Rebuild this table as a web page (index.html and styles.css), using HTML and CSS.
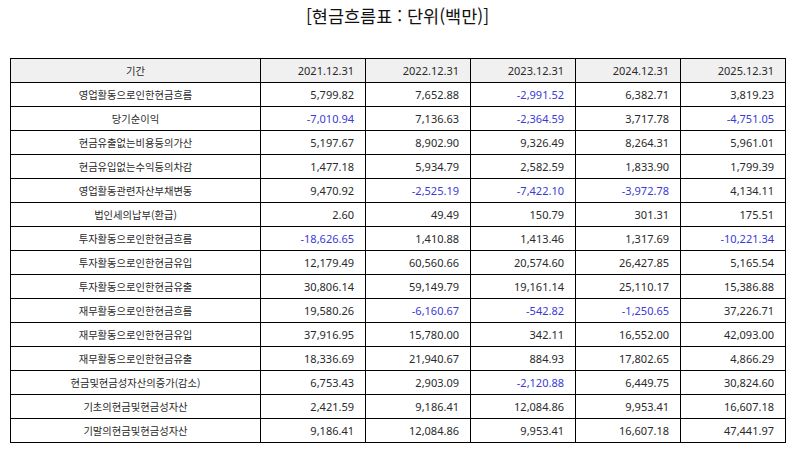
FILE: index.html
```html
<!DOCTYPE html>
<html lang="ko">
<head>
<meta charset="utf-8">
<title>현금흐름표</title>
<link rel="stylesheet" href="styles.css">
</head>
<body>
<div class="page">
  <h1 class="title">[현금흐름표 : 단위(백만)]</h1>
  <table class="cf">
    <colgroup>
      <col class="c-label"><col class="c-num"><col class="c-num"><col class="c-num"><col class="c-num"><col class="c-num">
    </colgroup>
    <thead>
      <tr><th class="label">기간</th><th>2021.12.31</th><th>2022.12.31</th><th>2023.12.31</th><th>2024.12.31</th><th>2025.12.31</th></tr>
    </thead>
    <tbody>
      <tr><td class="label">영업활동으로인한현금흐름</td><td>5,799.82</td><td>7,652.88</td><td class="neg">-2,991.52</td><td>6,382.71</td><td>3,819.23</td></tr>
      <tr><td class="label">당기순이익</td><td class="neg">-7,010.94</td><td>7,136.63</td><td class="neg">-2,364.59</td><td>3,717.78</td><td class="neg">-4,751.05</td></tr>
      <tr><td class="label">현금유출없는비용등의가산</td><td>5,197.67</td><td>8,902.90</td><td>9,326.49</td><td>8,264.31</td><td>5,961.01</td></tr>
      <tr><td class="label">현금유입없는수익등의차감</td><td>1,477.18</td><td>5,934.79</td><td>2,582.59</td><td>1,833.90</td><td>1,799.39</td></tr>
      <tr><td class="label">영업활동관련자산부채변동</td><td>9,470.92</td><td class="neg">-2,525.19</td><td class="neg">-7,422.10</td><td class="neg">-3,972.78</td><td>4,134.11</td></tr>
      <tr><td class="label">법인세의납부(환급)</td><td>2.60</td><td>49.49</td><td>150.79</td><td>301.31</td><td>175.51</td></tr>
      <tr><td class="label">투자활동으로인한현금흐름</td><td class="neg">-18,626.65</td><td>1,410.88</td><td>1,413.46</td><td>1,317.69</td><td class="neg">-10,221.34</td></tr>
      <tr><td class="label">투자활동으로인한현금유입</td><td>12,179.49</td><td>60,560.66</td><td>20,574.60</td><td>26,427.85</td><td>5,165.54</td></tr>
      <tr><td class="label">투자활동으로인한현금유출</td><td>30,806.14</td><td>59,149.79</td><td>19,161.14</td><td>25,110.17</td><td>15,386.88</td></tr>
      <tr><td class="label">재무활동으로인한현금흐름</td><td>19,580.26</td><td class="neg">-6,160.67</td><td class="neg">-542.82</td><td class="neg">-1,250.65</td><td>37,226.71</td></tr>
      <tr><td class="label">재무활동으로인한현금유입</td><td>37,916.95</td><td>15,780.00</td><td>342.11</td><td>16,552.00</td><td>42,093.00</td></tr>
      <tr><td class="label">재무활동으로인한현금유출</td><td>18,336.69</td><td>21,940.67</td><td>884.93</td><td>17,802.65</td><td>4,866.29</td></tr>
      <tr><td class="label">현금및현금성자산의증가(감소)</td><td>6,753.43</td><td>2,903.09</td><td class="neg">-2,120.88</td><td>6,449.75</td><td>30,824.60</td></tr>
      <tr><td class="label">기초의현금및현금성자산</td><td>2,421.59</td><td>9,186.41</td><td>12,084.86</td><td>9,953.41</td><td>16,607.18</td></tr>
      <tr><td class="label">기말의현금및현금성자산</td><td>9,186.41</td><td>12,084.86</td><td>9,953.41</td><td>16,607.18</td><td>47,441.97</td></tr>
    </tbody>
  </table>
</div>
</body>
</html>
```

FILE: styles.css
```css
html, body {
  margin: 0;
  padding: 0;
  background: #ffffff;
}
.page {
  padding: 0 9px 0 10px;
  font-family: "Noto Sans", "Noto Sans CJK KR", sans-serif;
  color: #2a2a2a;
}
.title {
  margin: 0;
  height: 58px;
  padding-top: 4px;
  box-sizing: border-box;
  text-align: center;
  font-family: "Noto Sans CJK KR", sans-serif;
  font-weight: normal;
  font-size: 17.5px;
  line-height: 24px;
  color: #111111;
}
.cf {
  width: 775px;
  border-collapse: collapse;
  table-layout: fixed;
  font-size: 11px;
}
.c-label { width: 250px; }
.c-num { width: 105px; }
.cf th, .cf td {
  border: 1px solid #000000;
  height: 24px;
  padding: 0 11px 0 4px;
  box-sizing: border-box;
  text-align: right;
  font-weight: normal;
  line-height: 14px;
  white-space: nowrap;
}
.cf th {
  background: #f0f0f0;
}
.cf .label {
  text-align: center;
  padding: 0 4px;
  font-family: "Noto Sans CJK KR", sans-serif;
  font-size: 10.3px;
}
.cf .neg {
  color: #3a3ad6;
}
```
